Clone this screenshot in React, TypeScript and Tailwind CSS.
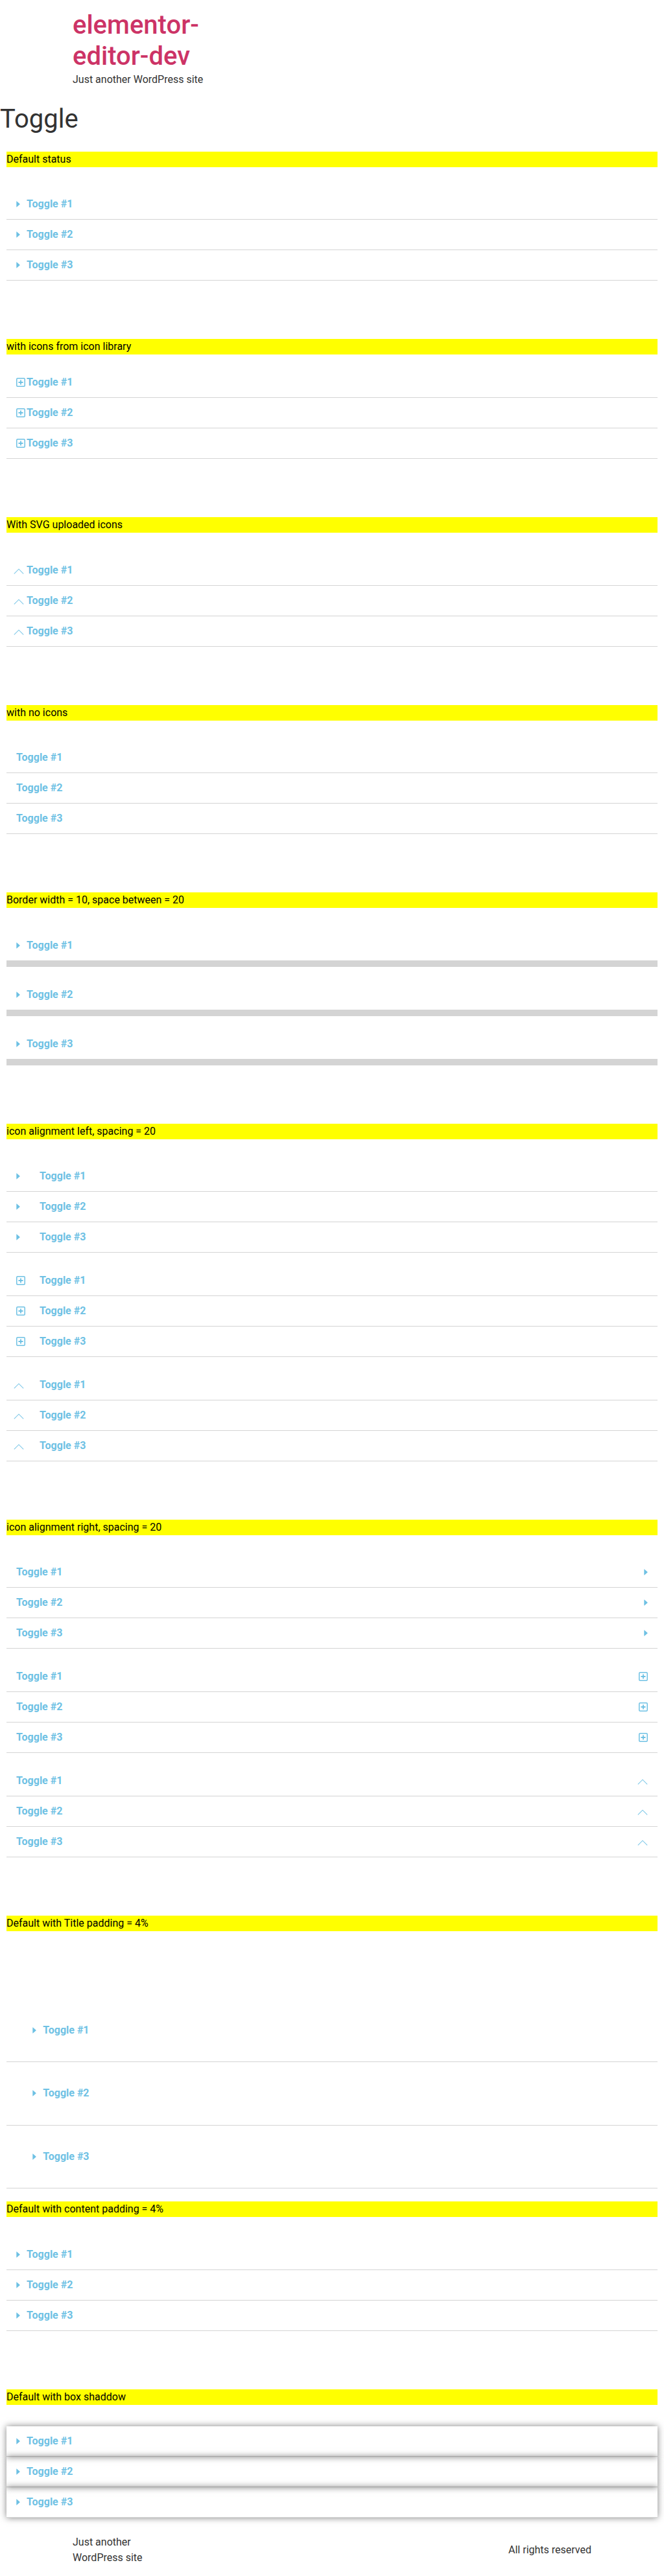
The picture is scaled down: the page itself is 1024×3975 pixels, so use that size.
import React from 'react';

type IconKind = 'caret' | 'plus' | 'chevron' | 'none';

function Caret() {
    return (
        <svg width="6" height="10" viewBox="0 0 6 10" aria-hidden="true">
            <path d="M0.3 0.7 Q0.3 0.2 0.8 0.6 L5.4 4.6 Q5.8 5 5.4 5.4 L0.8 9.4 Q0.3 9.8 0.3 9.3 Z" fill="#6ec1e4" />
        </svg>
    );
}

function PlusSquare() {
    return (
        <svg width="14" height="14" viewBox="0 0 14 14" aria-hidden="true">
            <rect x="0.75" y="0.75" width="12.5" height="12.5" rx="1.5" fill="none" stroke="#6ec1e4" strokeWidth="1.5" />
            <path d="M7 3.5 V10.5 M3.5 7 H10.5" stroke="#6ec1e4" strokeWidth="1.8" />
        </svg>
    );
}

function Chevron({ shift }: { shift?: boolean }) {
    return (
        <svg
            width="16"
            height="9"
            viewBox="0 0 16 9"
            aria-hidden="true"
            className={shift ? '-ml-1 shrink-0 mt-[2px]' : 'shrink-0 mt-[2px]'}
        >
            <polyline points="0.8,8.3 8,1.2 15.2,8.3" fill="none" stroke="#7fc8e8" strokeWidth="1.1" />
        </svg>
    );
}

function Icon({ kind, right, spaced }: { kind: IconKind; right?: boolean; spaced?: boolean }) {
    if (kind === 'none') return null;
    const box = spaced ? 'w-[36px]' : 'w-[16px]';
    return (
        <span className={`${box} h-4 flex items-center shrink-0 ${right ? 'justify-end' : 'justify-start'}`}>
            {kind === 'caret' && <Caret />}
            {kind === 'plus' && <PlusSquare />}
            {kind === 'chevron' && <Chevron shift={!right} />}
        </span>
    );
}

type ToggleProps = {
    icon?: IconKind;
    align?: 'left' | 'right';
    spaced?: boolean;
    variant?: 'default' | 'thick' | 'padded' | 'shadow';
};

function Toggle({ icon = 'caret', align = 'left', spaced = false, variant = 'default' }: ToggleProps) {
    const items = ['Toggle #1', 'Toggle #2', 'Toggle #3'];

    const itemClass =
        variant === 'thick'
            ? 'border-b-[10px] border-[#d4d4d4]'
            : variant === 'shadow'
              ? 'border-b border-[#d4d4d4] shadow-[0_0_10px_0_rgba(0,0,0,0.5)]'
              : 'border-b border-[#d4d4d4]';

    const titleClass = variant === 'padded' ? 'p-[4%]' : 'p-[15px]';

    return (
        <div className={`flex flex-col ${variant === 'thick' ? 'gap-5' : ''}`}>
            {items.map((label) => (
                <div key={label} className={itemClass}>
                    <div className={`${titleClass} flex items-center text-base leading-none font-bold text-[#6ec1e4]`}>
                        {align === 'left' && <Icon kind={icon} spaced={spaced} />}
                        <span className="whitespace-nowrap">{label}</span>
                        {align === 'right' && (
                            <span className="ml-auto flex">
                                <Icon kind={icon} right />
                            </span>
                        )}
                    </div>
                </div>
            ))}
        </div>
    );
}

function Label({ children }: { children: React.ReactNode }) {
    return <div className="h-6 leading-6 bg-[#ffff00] text-black text-base">{children}</div>;
}

export default function App() {
    return (
        <div className="font-['Roboto',sans-serif] bg-white text-[#333333] w-[1024px]">
            {/* Site header */}
            <header className="max-w-[800px] mx-auto pt-[15px]">
                <div className="w-[300px] text-[40px] leading-[48px] font-medium text-[#cc3366]">elementor-editor-dev</div>
                <p className="text-base leading-6 text-[#333333]">Just another WordPress site</p>
            </header>

            <h1 className="mt-[25px] text-[40px] leading-[48px] text-[#333333]">Toggle</h1>

            <main className="px-[10px]">
                <section className="mt-[26px]">
                    <Label>Default status</Label>
                    <div className="mt-[34px]">
                        <Toggle />
                    </div>
                </section>

                <section className="mt-[90px]">
                    <Label>with icons from icon library</Label>
                    <div className="mt-5">
                        <Toggle icon="plus" />
                    </div>
                </section>

                <section className="mt-[90px]">
                    <Label>With SVG uploaded icons</Label>
                    <div className="mt-[35px]">
                        <Toggle icon="chevron" />
                    </div>
                </section>

                <section className="mt-[90px]">
                    <Label>with no icons</Label>
                    <div className="mt-[34px]">
                        <Toggle icon="none" />
                    </div>
                </section>

                <section className="mt-[90px]">
                    <Label>Border width = 10, space between = 20</Label>
                    <div className="mt-[35px]">
                        <Toggle variant="thick" />
                    </div>
                </section>

                <section className="mt-[90px]">
                    <Label>icon alignment left, spacing = 20</Label>
                    <div className="mt-[34px] flex flex-col gap-5">
                        <Toggle spaced />
                        <Toggle icon="plus" spaced />
                        <Toggle icon="chevron" spaced />
                    </div>
                </section>

                <section className="mt-[90px]">
                    <Label>icon alignment right, spacing = 20</Label>
                    <div className="mt-[34px] flex flex-col gap-5">
                        <Toggle align="right" />
                        <Toggle icon="plus" align="right" />
                        <Toggle icon="chevron" align="right" />
                    </div>
                </section>

                <section className="mt-[90px]">
                    <Label>Default with Title padding = 4%</Label>
                    <div className="mt-[105px]">
                        <Toggle variant="padded" />
                    </div>
                </section>

                <section className="mt-5">
                    <Label>Default with content padding = 4%</Label>
                    <div className="mt-[35px]">
                        <Toggle />
                    </div>
                </section>

                <section className="mt-[90px]">
                    <Label>Default with box shaddow</Label>
                    <div className="mt-[33px]">
                        <Toggle variant="shadow" />
                    </div>
                </section>
            </main>

            {/* Footer */}
            <footer className="max-w-[800px] mx-auto mt-[26px] pb-[17px] flex items-center justify-between text-base leading-6 text-[#333333]">
                <p className="w-[130px]">Just another WordPress site</p>
                <p>All rights reserved</p>
            </footer>
        </div>
    );
}
